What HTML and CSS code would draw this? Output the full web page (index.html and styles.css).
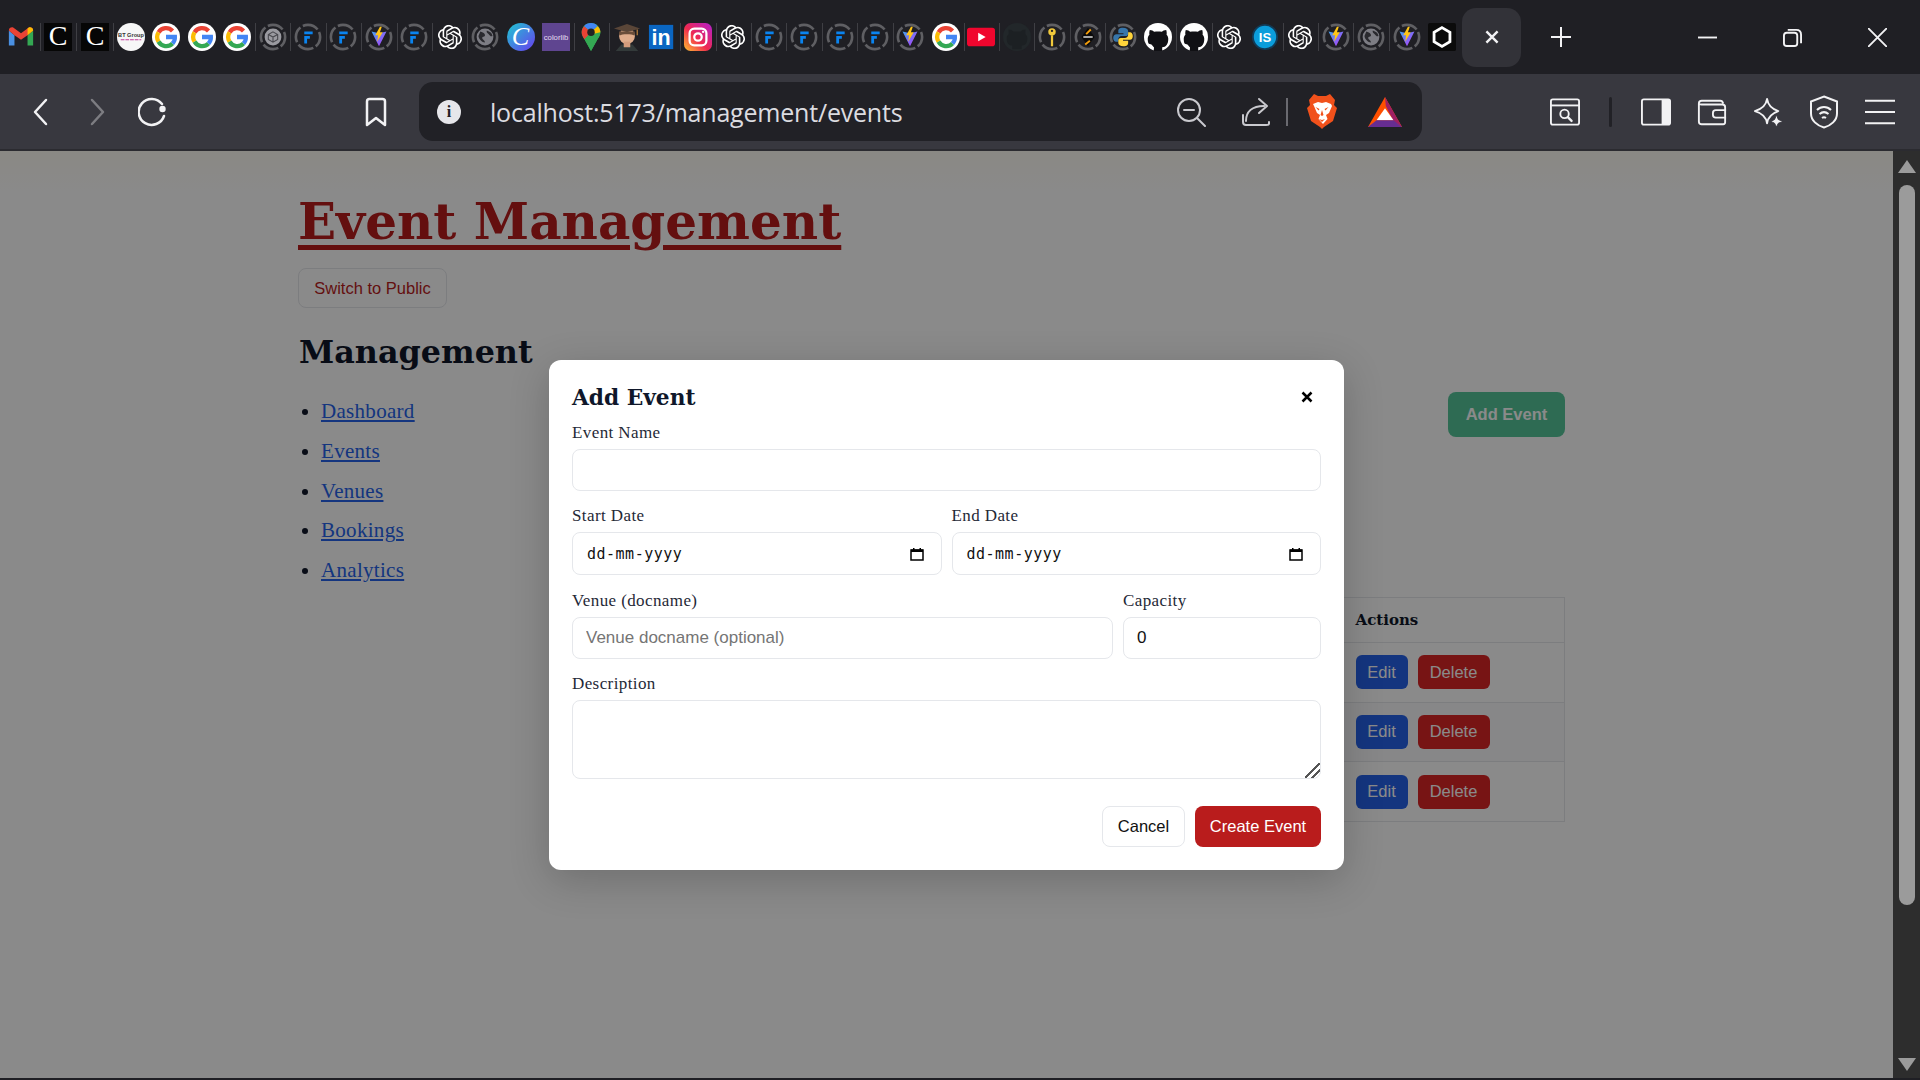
FILE: index.html
```html
<!DOCTYPE html>
<html lang="en">
<head>
<meta charset="utf-8">
<title>Event Management</title>
<link rel="stylesheet" href="styles.css">
</head>
<body>
<svg class="defs" width="0" height="0" aria-hidden="true">
  <defs>
    <linearGradient id="viteBody" x1="0" y1="0" x2="1" y2="1"><stop offset="0" stop-color="#41a5ee"/><stop offset="1" stop-color="#bd34fe"/></linearGradient>
    <linearGradient id="igBg" x1="0" y1="1" x2="1" y2="0"><stop offset="0" stop-color="#fdc230"/><stop offset=".45" stop-color="#f0294f"/><stop offset="1" stop-color="#b31fd0"/></linearGradient>
    <linearGradient id="canvaBg" x1="0" y1="0" x2="1" y2="1"><stop offset="0" stop-color="#1cc9d0"/><stop offset="1" stop-color="#6a3cf0"/></linearGradient>
    <symbol id="gmail" viewBox="0 0 30 30">
      <path d="M2 8v16h6V13z" fill="#4a90e2"/><path d="M22 13v11h6V8z" fill="#34a853"/>
      <path d="M2 8c0-3 3-4 5-3l8 6 8-6c2-1 5 0 5 3l-6 5-7 5-7-5z" fill="#ea4335"/>
      <path d="M22 5.800l1-.8c2-1 5 0 5 3l-6 5z" fill="#fbbc04"/>
    </symbol>
    <symbol id="cmark" viewBox="0 0 30 30">
      <rect width="30" height="30" fill="#060606"/>
      <text x="15" y="24" class="c-text" text-anchor="middle">C</text>
    </symbol>
    <symbol id="bt" viewBox="0 0 30 30">
      <circle cx="15" cy="15" r="15" fill="#f7f7f7"/>
      <text x="15" y="15" class="bt-text" text-anchor="middle">BT Group</text>
      <path d="M4 18h22" stroke="#c3399a" stroke-width="1.200" stroke-dasharray="4 1"/>
    </symbol>
    <symbol id="g" viewBox="0 0 30 30">
      <circle cx="15" cy="15" r="15" fill="#fff"/>
      <path d="M22 8.500A9.500 9.500 0 0 0 7 10" fill="none" stroke="#ea4335" stroke-width="4.600"/>
      <path d="M7 10a9.500 9.500 0 0 0 0 10" fill="none" stroke="#fbbc05" stroke-width="4.600"/>
      <path d="M7 20a9.500 9.500 0 0 0 15 2" fill="none" stroke="#34a853" stroke-width="4.600"/>
      <path d="M22 22a9.500 9.500 0 0 0 2.500-7H15" fill="none" stroke="#4285f4" stroke-width="4.600"/>
    </symbol>
    <symbol id="ring" viewBox="0 0 30 30">
      <circle cx="15" cy="15" r="13" fill="none" stroke="#5f5f63" stroke-width="2.800" stroke-dasharray="17.400 3" stroke-dashoffset="6"/>
    </symbol>
    <symbol id="rf" viewBox="0 0 30 30">
      <use href="#ring"/>
      <path d="M11 9h9v3h-9zM11 14h6v3h-3v5h-3z" fill="#0a84f0"/>
    </symbol>
    <symbol id="rcube" viewBox="0 0 30 30">
      <use href="#ring"/><circle cx="15" cy="15" r="9" fill="#9a9aa0"/>
      <path d="M15 9.500l5 2.800v5.400l-5 2.800-5-2.800v-5.400zM10 12.300l5 2.800 5-2.800M15 15v5.500" fill="none" stroke="#4a4a50" stroke-width="1.200"/>
    </symbol>
    <symbol id="rvite" viewBox="0 0 30 30">
      <use href="#ring"/>
      <path d="M7 9l8 16 8-16-8 2z" fill="url(#viteBody)"/>
      <path d="M16 4l-5 9h3l-1 7 6-10h-3l2-6z" fill="#ffc517"/>
    </symbol>
    <symbol id="rglobe" viewBox="0 0 30 30">
      <use href="#ring"/><circle cx="15" cy="15" r="9" fill="#7d7d84"/>
      <path d="M10 9c3 1 5 2 5 4s-3 1-3 3 3 2 3 5c-3 0-7-4-7-7zM17 8c3 1 6 3 6 6-2 1-3-1-4-2s-3-2-2-4z" fill="#2a2a2f"/>
    </symbol>
    <symbol id="rkey" viewBox="0 0 30 30">
      <use href="#ring"/>
      <circle cx="15" cy="9.500" r="4" fill="#f1c93b"/><circle cx="15" cy="8.500" r="1.200" fill="#1f1f24"/>
      <path d="M13.800 13h2.400v11l-1.200 1.500-1.200-1.500z" fill="#f1c93b"/>
    </symbol>
    <symbol id="rlang" viewBox="0 0 30 30">
      <use href="#ring"/>
      <path d="M15 5l-7 10 7 10 7-10z" fill="#0a0a0a"/>
      <path d="M18 7l-5 5M12 23l5-4" stroke="#f59e0b" stroke-width="2"/>
      <path d="M10 15h10" stroke="#ddd" stroke-width="1.600"/>
    </symbol>
    <symbol id="rpy" viewBox="0 0 30 30">
      <use href="#ring"/>
      <path d="M15 5c-4 0-5 1.500-5 3.500V11h5.500v1H8c-2 0-3.500 1.500-3.500 4s1.500 4 3 4H10v-2.500c0-2 1.500-3.500 3.500-3.500H18c1.500 0 2.500-1 2.500-2.500V8.500C20.500 6.500 18.500 5 15 5z" fill="#3776ab"/>
      <path d="M15.500 25c4 0 5-1.500 5-3.500V19H15v-1h7.500c2 0 3-1.500 3-4s-1.500-4-3-4H20.500v2.500c0 2-1.500 3.500-3.500 3.500h-4.500C11 16 10 17 10 18.500v3c0 2 2 3.500 5.500 3.500z" fill="#ffd43b"/>
    </symbol>
    <symbol id="openai" viewBox="0 0 24 24">
      <path fill="#fff" d="M22.282 9.821a5.985 5.985 0 0 0-.516-4.91 6.046 6.046 0 0 0-6.51-2.9A6.065 6.065 0 0 0 4.981 4.18a5.985 5.985 0 0 0-3.998 2.9 6.046 6.046 0 0 0 .743 7.097 5.98 5.98 0 0 0 .51 4.911 6.051 6.051 0 0 0 6.515 2.9A5.985 5.985 0 0 0 13.26 24a6.056 6.056 0 0 0 5.772-4.206 5.99 5.99 0 0 0 3.997-2.9 6.057 6.057 0 0 0-.747-7.073zM13.26 22.43a4.476 4.476 0 0 1-2.876-1.04l.141-.081 4.779-2.758a.795.795 0 0 0 .392-.681v-6.737l2.02 1.168a.071.071 0 0 1 .038.052v5.583a4.504 4.504 0 0 1-4.494 4.494zM3.6 18.304a4.47 4.47 0 0 1-.535-3.014l.142.085 4.783 2.759a.771.771 0 0 0 .78 0l5.843-3.369v2.332a.08.08 0 0 1-.033.062L9.74 19.95a4.5 4.5 0 0 1-6.14-1.646zM2.34 7.896a4.485 4.485 0 0 1 2.366-1.973V11.6a.766.766 0 0 0 .388.676l5.815 3.355-2.02 1.168a.076.076 0 0 1-.071 0l-4.83-2.786A4.504 4.504 0 0 1 2.34 7.872zm16.597 3.855l-5.833-3.387L15.119 7.2a.076.076 0 0 1 .071 0l4.83 2.791a4.494 4.494 0 0 1-.676 8.105v-5.678a.79.79 0 0 0-.407-.667zm2.01-3.023l-.141-.085-4.774-2.782a.776.776 0 0 0-.785 0L9.409 9.23V6.897a.066.066 0 0 1 .028-.061l4.83-2.787a4.5 4.5 0 0 1 6.68 4.66zm-12.64 4.135l-2.02-1.164a.08.08 0 0 1-.038-.057V6.075a4.5 4.5 0 0 1 7.375-3.453l-.142.08L8.704 5.46a.795.795 0 0 0-.393.681zm1.097-2.365l2.602-1.5 2.607 1.5v2.999l-2.597 1.5-2.607-1.5Z"/>
    </symbol>
    <symbol id="ropenai" viewBox="0 0 30 30">
      <svg x="2" y="2" width="26" height="26" viewBox="0 0 24 24"><use href="#openai"/></svg>
    </symbol>
    <symbol id="canva" viewBox="0 0 30 30">
      <circle cx="15" cy="15" r="15" fill="url(#canvaBg)"/>
      <text x="14.500" y="24" class="canva-text" text-anchor="middle">C</text>
    </symbol>
    <symbol id="colorlib" viewBox="0 0 30 30">
      <rect width="30" height="30" fill="#5f4590"/>
      <text x="15" y="18" class="colorlib-text" text-anchor="middle">colorlib</text>
    </symbol>
    <symbol id="maps" viewBox="0 0 30 30">
      <path d="M15 0C9 0 5 4.500 5 10c0 3 1.500 5.500 3 7.500L15 30l7-12.500c1.500-2 3-4.500 3-7.500C25 4.500 21 0 15 0z" fill="#34a853"/>
      <path d="M15 0C12 0 9 1 7.500 3.500L15 10l7-6.500C20.500 1 18 0 15 0z" fill="#4285f4"/>
      <path d="M7.500 3.500C6 5.500 5 7.500 5 10c0 3 1.500 5.500 3 7.500L15 10z" fill="#ea4335"/>
      <path d="M8 17.500L22 3.500c2 1.500 3 4 3 6.500 0 3-1.500 5.500-3 7.500L15 30z" fill="#34a853"/>
      <path d="M15 10L22 3.500c2 1.500 3 4 3 6.500l-9 2z" fill="#fbbc04"/>
      <circle cx="15" cy="10" r="4" fill="#222"/>
    </symbol>
    <symbol id="grad" viewBox="0 0 30 30">
      <path d="M9 23h12l6 7H3z" fill="#333a3a"/>
      <circle cx="15" cy="14" r="8.500" fill="#e0ad8c"/>
      <rect x="11.500" y="20" width="7" height="6" fill="#d49c7c"/>
      <path d="M1 6l14-5 14 5-14 4z" fill="#5a4638"/>
      <path d="M6.500 9c0 2 0 3 .8 4.500 2-2 13.400-2 15.400 0 .8-1.500.8-2.500.8-4.500z" fill="#6b4e3a"/>
      <path d="M26 7v6" stroke="#a8763a" stroke-width="1.500"/>
    </symbol>
    <symbol id="linkedin" viewBox="0 0 30 30">
      <rect x="1" y="2" width="26" height="26" fill="#0a66c2"/>
      <text x="14" y="24" class="li-text" text-anchor="middle">in</text>
    </symbol>
    <symbol id="instagram" viewBox="0 0 30 30">
      <rect width="30" height="30" rx="7" fill="url(#igBg)"/>
      <rect x="6" y="6" width="18" height="18" rx="5" fill="none" stroke="#fff" stroke-width="2.400"/>
      <circle cx="15" cy="15" r="4" fill="none" stroke="#fff" stroke-width="2.400"/>
      <circle cx="20.500" cy="9.500" r="1.300" fill="#fff"/>
    </symbol>
    <symbol id="youtube" viewBox="0 0 30 30">
      <rect y="5" width="30" height="20" rx="3" fill="#f0062e"/>
      <path d="M12 10.500l8 4.500-8 4.500z" fill="#fff"/>
    </symbol>
    <symbol id="ghdark" viewBox="0 0 30 30">
      <circle cx="15" cy="15" r="15" fill="#22272a"/>
      <path d="M10 28v-4c-4 0-6-2-6-8 0-2 1-3 2-4V7c2 0 4 1 5 2h8c1-1 3-2 5-2v5c1 1 2 2 2 4 0 6-2 8-6 8v4z" fill="#1c2023"/>
    </symbol>
    <symbol id="ghwhite" viewBox="0 0 30 30">
      <circle cx="15" cy="15" r="15" fill="#fff"/>
      <path d="M10.500 30v-4c-4 0-6.500-3-6.500-9 0-2 .8-3.500 1.800-4.500C5.500 11 5.700 9 6.200 7.500c2 0 3.800 1 4.800 2 2.500-.6 5.500-.6 8 0 1-1 2.800-2 4.800-2 .5 1.500.7 3.500.4 5 1 1 1.800 2.500 1.800 4.500 0 6-2.500 9-6.500 9v4z" fill="#101014"/>
      <path d="M4 22l4 1 2.500 3-.1 1.800C7 27 5 25 4 22z" fill="#fff"/>
    </symbol>
    <symbol id="is" viewBox="0 0 30 30">
      <circle cx="15" cy="15" r="13" fill="#0b9ddb" stroke="#123a55" stroke-width="2"/>
      <text x="15" y="20.500" class="is-text" text-anchor="middle">IS</text>
    </symbol>
    <symbol id="hex" viewBox="0 0 30 30">
      <rect width="30" height="30" rx="2" fill="#0b0b0b"/>
      <path d="M15 5l8.500 5v10L15 25l-8.500-5V10z" fill="none" stroke="#fff" stroke-width="3"/>
    </symbol>
    <symbol id="lion" viewBox="0 0 30 35" preserveAspectRatio="none">
      <path d="M7 0l4 2h8l4-2 5 6-1 5 3 3-4 13-9 6-2 2-2-2-9-6-4-13 3-3-1-5z" fill="#f1511b"/>
      <path d="M6 10l5-2 4 1 4-1 5 2 1 2-3 7-3 2 1.500 4-4.500 5-4.500-5 1.500-4-3-2-3-7z" fill="#fff"/>
      <path d="M12 25l3 1 3-1-3 3zM8.500 13l4 2-1 1.500zM21.500 13l-4 2 1 1.500zM13.500 21l1.500-5 1.500 5-1.500 1z" fill="#f1511b"/>
    </symbol>
    <symbol id="bat" viewBox="0 0 40 40" preserveAspectRatio="none">
      <path d="M20 0L0 40h40z" fill="#ff5000"/>
      <path d="M20 0l20 40-10-8-9-20z" fill="#9e1f63"/>
      <path d="M20 15l10 16H10z" fill="#fff"/>
      <path d="M0 40l10-9h20l10 9z" fill="#662d91"/>
    </symbol>
  </defs>
</svg>

<header class="tabbar">
  <div class="tabs">
    <span class="tab wide"><svg class="fav"><use href="#gmail"/></svg></span>
    <span class="tab wide sep"><svg class="fav"><use href="#cmark"/></svg></span>
    <span class="tab wide sep"><svg class="fav"><use href="#cmark"/></svg></span>
    <span class="tab sep"><svg class="fav"><use href="#bt"/></svg></span>
    <span class="tab"><svg class="fav"><use href="#g"/></svg></span>
    <span class="tab"><svg class="fav"><use href="#g"/></svg></span>
    <span class="tab"><svg class="fav"><use href="#g"/></svg></span>
    <span class="tab sep"><svg class="fav"><use href="#rcube"/></svg></span>
    <span class="tab sep"><svg class="fav"><use href="#rf"/></svg></span>
    <span class="tab sep"><svg class="fav"><use href="#rf"/></svg></span>
    <span class="tab sep"><svg class="fav"><use href="#rvite"/></svg></span>
    <span class="tab sep"><svg class="fav"><use href="#rf"/></svg></span>
    <span class="tab sep"><svg class="fav"><use href="#ropenai"/></svg></span>
    <span class="tab sep"><svg class="fav"><use href="#rglobe"/></svg></span>
    <span class="tab"><svg class="fav"><use href="#canva"/></svg></span>
    <span class="tab"><svg class="fav"><use href="#colorlib"/></svg></span>
    <span class="tab sep"><svg class="fav"><use href="#maps"/></svg></span>
    <span class="tab sep"><svg class="fav"><use href="#grad"/></svg></span>
    <span class="tab"><svg class="fav"><use href="#linkedin"/></svg></span>
    <span class="tab sep"><svg class="fav"><use href="#instagram"/></svg></span>
    <span class="tab sep"><svg class="fav"><use href="#ropenai"/></svg></span>
    <span class="tab sep"><svg class="fav"><use href="#rf"/></svg></span>
    <span class="tab sep"><svg class="fav"><use href="#rf"/></svg></span>
    <span class="tab sep"><svg class="fav"><use href="#rf"/></svg></span>
    <span class="tab sep"><svg class="fav"><use href="#rf"/></svg></span>
    <span class="tab sep"><svg class="fav"><use href="#rvite"/></svg></span>
    <span class="tab"><svg class="fav"><use href="#g"/></svg></span>
    <span class="tab sep"><svg class="fav"><use href="#youtube"/></svg></span>
    <span class="tab sep"><svg class="fav"><use href="#ghdark"/></svg></span>
    <span class="tab sep"><svg class="fav"><use href="#rkey"/></svg></span>
    <span class="tab sep"><svg class="fav"><use href="#rlang"/></svg></span>
    <span class="tab sep"><svg class="fav"><use href="#rpy"/></svg></span>
    <span class="tab"><svg class="fav"><use href="#ghwhite"/></svg></span>
    <span class="tab sep"><svg class="fav"><use href="#ghwhite"/></svg></span>
    <span class="tab sep"><svg class="fav"><use href="#ropenai"/></svg></span>
    <span class="tab"><svg class="fav"><use href="#is"/></svg></span>
    <span class="tab sep"><svg class="fav"><use href="#ropenai"/></svg></span>
    <span class="tab sep"><svg class="fav"><use href="#rvite"/></svg></span>
    <span class="tab sep"><svg class="fav"><use href="#rglobe"/></svg></span>
    <span class="tab sep"><svg class="fav"><use href="#rvite"/></svg></span>
    <span class="tab"><svg class="fav"><use href="#hex"/></svg></span>
  </div>
  <div class="tab-active"><svg class="ic16" viewBox="0 0 20 20"><path d="M3 3l14 14M17 3L3 17" class="st3"/></svg></div>
  <svg class="newtab" viewBox="0 0 20 20"><path d="M10 0v20M0 10h20" class="st2"/></svg>
  <div class="window-controls">
    <svg class="winbtn" viewBox="0 0 20 20"><path d="M0 10h20" class="st2"/></svg>
    <svg class="winbtn" viewBox="0 0 20 20"><rect x="1" y="5" width="14" height="14" rx="3" class="st2"/><path d="M5 2h9c3 0 5 2 5 5v9" class="st2"/></svg>
    <svg class="winbtn" viewBox="0 0 20 20"><path d="M0 0l20 20M20 0L0 20" class="st2"/></svg>
  </div>
</header>

<nav class="toolbar">
  <div class="nav-left">
    <svg class="tool back" viewBox="0 0 30 30"><path d="M20 3L9 15l11 12" class="st25"/></svg>
    <svg class="tool fwd" viewBox="0 0 30 30"><path d="M10 3l11 12-11 12" class="st25 dim"/></svg>
    <svg class="tool reload" viewBox="0 0 30 30"><path d="M24 7A13 13 0 1 0 26 19" class="st25"/><circle cx="24.500" cy="12" r="3.200" fill="#f2f2f4"/></svg>
  </div>
  <svg class="tool bookmark" viewBox="0 0 30 30"><path d="M6 4.500Q6 2 8.500 2h13Q24 2 24 4.500V28l-9-7-9 7z" class="st25"/></svg>
  <div class="address">
    <span class="info">i</span>
    <span class="url">localhost:5173/management/events</span>
    <svg class="tool a-zoom" viewBox="0 0 30 30"><circle cx="13" cy="13" r="11" class="st2 grey"/><path d="M8 13h10M21 21l8 8" class="st2 grey"/></svg>
    <svg class="tool a-share" viewBox="0 0 30 30"><path d="M2 18v7q0 3 3 3h20q3 0 3-1.500v-1.500M5 24c0-9 6-15 18-15M18 2l8 7-8 7" class="st2 grey"/></svg>
    <span class="a-sep"></span>
    <svg class="a-lion"><use href="#lion"/></svg>
    <svg class="a-bat"><use href="#bat"/></svg>
  </div>
  <div class="nav-right">
    <svg class="tool" viewBox="0 0 32 30"><rect x="1" y="1.500" width="30" height="27" rx="2" class="st2"/><path d="M1 8h30" class="st2"/><circle cx="15.500" cy="17" r="4.500" class="st2"/><path d="M19 20.500l4 4" class="st25"/></svg>
    <span class="tb-sep"></span>
    <svg class="tool" viewBox="0 0 32 30"><rect x="1" y="1.500" width="30" height="27" rx="2" class="st2"/><path d="M22 1.500h8q1 0 1 1v25q0 1-1 1h-8z" fill="#f2f2f4"/></svg>
    <svg class="tool" viewBox="0 0 32 30"><path d="M2 6q0-3 3-3h20q2 0 3 3M2 6v19q0 3 3 3h23q2 0 2-2V10q0-3-3-3H5q-3 0-3-1z" class="st2"/><path d="M31 13h-11q-3 0-3 3v2q0 3 3 3h11" class="st2"/></svg>
    <svg class="tool" viewBox="0 0 32 32"><path d="M15 2c1 7 6 11 12 13-6 2-11 6-12 13-1-7-6-11-13-13 7-2 12-6 13-13z" class="st2 round"/><path d="M25 19l2 5 5 2-5 2-2 4-2-4-4-2 4-2z" fill="#f2f2f4" stroke="#38383f"/></svg>
    <svg class="tool shield" viewBox="0 0 30 34"><path d="M15 1.500l13 5v12c0 7-6 12-13 14-7-2-13-7-13-14v-12z" class="st2"/><path d="M8 15c4-4 10-4 14 0M10.500 19c3-2.500 6-2.500 9 0" class="st2"/><path d="M13 23c1.500-1 2.500-1 4 0" class="st2"/></svg>
    <svg class="tool" viewBox="0 0 32 30"><path d="M0 3h32M0 15h32M0 27h32" class="st2"/></svg>
  </div>
</nav>

<div class="viewport">
  <div class="page">
    <h1 class="title"><a href="#">Event Management</a></h1>
    <button class="switch">Switch to Public</button>
    <div class="layout">
      <aside class="side">
        <h2 class="side-title">Management</h2>
        <ul class="side-list">
          <li><a href="#">Dashboard</a></li>
          <li><a href="#">Events</a></li>
          <li><a href="#">Venues</a></li>
          <li><a href="#">Bookings</a></li>
          <li><a href="#">Analytics</a></li>
        </ul>
      </aside>
      <main class="main">
        <div class="main-head"><button class="add">Add Event</button></div>
        <table class="grid">
          <thead><tr><th></th><th class="col-actions">Actions</th></tr></thead>
          <tbody>
            <tr><td></td><td><div class="actions"><button class="edit">Edit</button><button class="del">Delete</button></div></td></tr>
            <tr class="even"><td></td><td><div class="actions"><button class="edit">Edit</button><button class="del">Delete</button></div></td></tr>
            <tr><td></td><td><div class="actions"><button class="edit">Edit</button><button class="del">Delete</button></div></td></tr>
          </tbody>
        </table>
      </main>
    </div>
    <div class="overlay">
      <section class="modal">
        <div class="modal-head">
          <h3 class="modal-title">Add Event</h3>
          <svg class="close" viewBox="0 0 12 12"><path d="M1.500 1.500l9 9M10.500 1.500l-9 9"/></svg>
        </div>
        <div class="field">
          <label class="label">Event Name</label>
          <input class="input" type="text">
        </div>
        <div class="row">
          <div class="field grow">
            <label class="label">Start Date</label>
            <div class="input date"><span class="date-text">dd-mm-yyyy</span><svg class="cal" viewBox="0 0 14 14"><path d="M1 3h12v10H1z" fill="none" stroke="#000" stroke-width="1.500"/><path d="M1 2.500h12v2.500H1zM3 1h1.500v2H3zM9.500 1H11v2H9.500z"/></svg></div>
          </div>
          <div class="field grow">
            <label class="label">End Date</label>
            <div class="input date"><span class="date-text">dd-mm-yyyy</span><svg class="cal" viewBox="0 0 14 14"><path d="M1 3h12v10H1z" fill="none" stroke="#000" stroke-width="1.500"/><path d="M1 2.500h12v2.500H1zM3 1h1.500v2H3zM9.500 1H11v2H9.500z"/></svg></div>
          </div>
        </div>
        <div class="row">
          <div class="field venue">
            <label class="label">Venue (docname)</label>
            <input class="input" type="text" placeholder="Venue docname (optional)">
          </div>
          <div class="field capacity">
            <label class="label">Capacity</label>
            <input class="input" type="text" value="0">
          </div>
        </div>
        <div class="field">
          <label class="label">Description</label>
          <textarea class="input area"></textarea>
        </div>
        <div class="modal-actions">
          <button class="cancel">Cancel</button>
          <button class="create">Create Event</button>
        </div>
      </section>
    </div>
  </div>
  <div class="scrollbar">
    <span class="arrow-up"></span>
    <span class="thumb"></span>
    <span class="arrow-down"></span>
  </div>
</div>
<div class="bottom-line"></div>
</body>
</html>
```
FILE: styles.css
```css
* { box-sizing: border-box; }
html, body { margin: 0; height: 1080px; overflow: hidden; }
body { background: #1f1f24; display: flex; flex-direction: column; font-family: "Liberation Serif", serif; }
.defs { position: absolute; }

/* tab strip */
.tabbar { height: 74px; flex: none; background: #1f1f24; display: flex; align-items: center; padding-left: 3px; }
.tabs { display: flex; align-items: center; width: 1457px; }
.tab { width: 35.44px; height: 30px; flex: none; display: flex; align-items: center; justify-content: center; position: relative; }
.tab.wide { width: 36.7px; }
.tab.sep::before { content: ""; position: absolute; left: 0; top: 1px; bottom: 1px; width: 1px; background: #3f3f44; }
.fav { width: 28px; height: 30px; }
.c-text { font: 400 30px "Liberation Serif", serif; fill: #fff; }
.bt-text { font: 700 6px "Liberation Sans", sans-serif; fill: #333; }
.canva-text { font: italic 400 28px "Liberation Serif", serif; fill: #fff; }
.colorlib-text { font: 400 8.300px "Liberation Sans", sans-serif; fill: #e3dcef; }
.li-text { font: 700 23px "Liberation Sans", sans-serif; fill: #fff; }
.is-text { font: 700 14px "Liberation Sans", sans-serif; fill: #fff; }
.tab-active { width: 59px; height: 59px; margin-left: 2px; background: #323238; border-radius: 14px; display: flex; align-items: center; justify-content: center; }
.ic16 { width: 16px; height: 16px; }
.newtab { width: 20px; height: 20px; margin-left: 30px; }
.window-controls { margin-left: auto; display: flex; gap: 66px; padding-right: 33px; }
.winbtn { width: 19px; height: 19px; }
.st2, .st25, .st3 { fill: none; stroke: #f2f2f4; }
.st2 { stroke-width: 2; }
.st25 { stroke-width: 2.500; stroke-linecap: round; stroke-linejoin: round; }
.st3 { stroke-width: 3; }
.st2.grey { stroke: #c9c9ce; stroke-linecap: round; stroke-linejoin: round; }
.st2.round { stroke-linejoin: round; }
.st25.dim { stroke: #7d7d82; }

/* toolbar */
.toolbar { height: 77px; flex: none; background: #38383f; border-bottom: 2px solid #2b2b30; display: flex; align-items: center; position: relative; }
.nav-left { display: flex; align-items: center; padding-left: 26px; gap: 26px; }
.tool { width: 30px; height: 30px; flex: none; }
.tool.shield { height: 34px; }
.bookmark { margin-left: 193px; }
.address { width: 1003px; height: 59px; margin-left: 28px; background: #212126; border-radius: 14px; display: flex; align-items: center; padding-left: 18px; }
.info { width: 24px; height: 24px; border-radius: 50%; background: #e6e6ea; color: #212126; font: 700 16px "Liberation Serif", serif; display: flex; align-items: center; justify-content: center; flex: none; }
.url { margin-left: 29px; font: 400 25px "Open Sans", sans-serif; color: #dcdce0; white-space: nowrap; width: 686px; flex: none; letter-spacing: -.2px; }
.a-zoom { margin-left: 0; }
.a-share { margin-left: 35px; }
.a-sep { width: 2px; height: 28px; background: #6a6a70; margin-left: 15px; flex: none; }
.a-lion { width: 30px; height: 35px; margin-left: 19px; flex: none; }
.a-bat { width: 34px; height: 30px; margin-left: 31px; flex: none; }
.nav-right { display: flex; align-items: center; gap: 26px; margin-left: 128px; }
.tb-sep { width: 3px; height: 30px; background: #212126; border-radius: 2px; margin: 0 3px; flex: none; }

/* viewport */
.viewport { height: 927px; flex: none; display: flex; }
.page { position: relative; flex: 1; min-width: 0; background: linear-gradient(#fffdf4, #fff 40px); padding: 0 328px 0 298px; color: #0f172a; }
.title { margin: 34px 0 0; font-family: "DejaVu Serif", serif; font-size: 50px; line-height: 73px; font-weight: 700; }
.title a { color: #b91c1c; text-decoration-thickness: 5px; text-underline-offset: 6px; }
.switch { display: block; margin-top: 10px; width: 149px; height: 40px; background: transparent; border: 1px solid #e5e7eb; border-radius: 8px; color: #b91c1c; font: 400 16.500px "Liberation Sans", sans-serif; padding: 0; }
.layout { display: grid; grid-template-columns: 300px 1fr; column-gap: 0; }
.side-title { margin: 22px 0 0; padding-left: 1px; font-family: "DejaVu Serif", serif; font-size: 31.800px; line-height: 44px; font-weight: 700; color: #0f172a; }
.side-list { margin: 25px 0 0; padding: 0 0 0 23px; font-size: 21px; line-height: 24px; letter-spacing: .3px; }
.side-list li { margin-bottom: 15.800px; }
.side-list a { color: #2563eb; }
.main { padding-top: 84px; min-width: 0; }
.main-head { display: flex; justify-content: flex-end; }
.add { width: 117px; height: 45px; background: #55c69a; color: #fff; border: 0; border-radius: 8px; font: 700 16.500px "Liberation Sans", sans-serif; }
.grid { margin-top: 160px; width: 100%; border-collapse: collapse; border: 1px solid #e5e7eb; }
.grid th { height: 45px; text-align: left; padding: 0 10px; border-bottom: 1px solid #e5e7eb; font-family: "DejaVu Serif", serif; font-size: 15px; }
.col-actions { width: 219px; }
.grid td { height: 59.670px; padding: 0 10px; border-bottom: 1px solid #e5e7eb; }
.grid .even { background: #f9fafb; }
.actions { display: flex; gap: 10px; }
.edit, .del { height: 34px; border: 0; border-radius: 6px; color: #fff; font: 400 16.500px "Liberation Sans", sans-serif; padding: 0; }
.edit { width: 52px; background: #2563eb; }
.del { width: 72px; background: #dc2626; }

/* modal */
.overlay { position: absolute; inset: 0; background: rgba(0, 0, 0, .46); display: flex; align-items: center; justify-content: center; }
.modal { width: 795px; height: 510px; margin-top: 1px; background: #fff; border-radius: 12px; padding: 22px 23px; box-shadow: 0 10px 40px rgba(0, 0, 0, .2); color: #1f2937; }
.modal-head { display: flex; justify-content: space-between; align-items: center; height: 32px; margin-bottom: 7.300px; }
.modal-title { margin: 0; font-family: "DejaVu Serif", serif; font-size: 21.700px; line-height: 32px; font-weight: 700; color: #0f172a; }
.close { width: 12px; height: 12px; margin-right: 8px; margin-top: -2px; fill: none; stroke: #000; stroke-width: 2.500; }
.field { display: flex; flex-direction: column; margin-bottom: 13.500px; min-width: 0; }
.label { font-size: 17px; line-height: 24px; margin-bottom: 4px; letter-spacing: .4px; color: #1f2937; }
.input { display: block; width: 100%; height: 41.700px; border: 1px solid #e5e7eb; border-radius: 8px; padding: 0 13px; font: 400 17px "Liberation Sans", sans-serif; color: #111; background: #fff; outline: none; }
.input::placeholder { color: #757575; opacity: 1; }
.row { display: flex; gap: 10px; }
.grow { flex: 1; }
.venue { flex: 1; }
.capacity { width: 198px; flex: none; }
.date { display: flex; align-items: center; justify-content: space-between; height: 43px; padding: 0 17px 0 14px; }
.date-text { font: 400 15px "DejaVu Sans Mono", monospace; letter-spacing: .5px; }
.cal { width: 14px; height: 14px; }
.area { height: 79px; padding: 8px 13px; resize: vertical; }
.area::-webkit-resizer { background: linear-gradient(135deg, transparent 46%, #555 46% 54%, transparent 54% 70%, #555 70% 78%, transparent 78%); }
.modal-actions { display: flex; justify-content: flex-end; gap: 10px; margin-top: 26.800px; }
.cancel, .create { height: 41px; border-radius: 8px; font: 400 16.500px "Liberation Sans", sans-serif; padding: 0; }
.cancel { width: 83px; background: #fff; border: 1px solid #e5e7eb; color: #111; }
.create { width: 126px; background: #b91c1c; border: 0; color: #fff; }

/* browser scrollbar */
.scrollbar { width: 27px; flex: none; background: #2d2d2d; display: flex; flex-direction: column; align-items: center; position: relative; padding-top: 9px; }
.arrow-up { width: 0; height: 0; border-left: 9px solid transparent; border-right: 9px solid transparent; border-bottom: 13px solid #9b9b9b; }
.thumb { width: 16px; height: 720px; margin-top: 12px; background: #9b9b9b; border-radius: 8px; }
.arrow-down { width: 0; height: 0; margin-top: auto; margin-bottom: 7px; border-left: 9px solid transparent; border-right: 9px solid transparent; border-top: 13px solid #9b9b9b; }
.bottom-line { height: 2px; background: #1f1f24; }
```
